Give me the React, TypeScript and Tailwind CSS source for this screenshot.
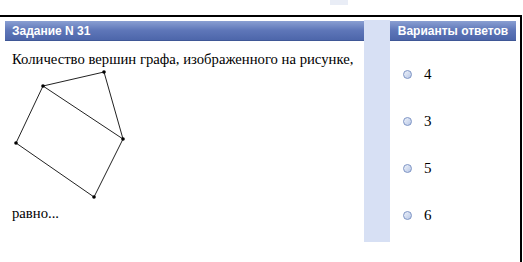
import React from "react";

const answers = ["4", "3", "5", "6"];

const headerCls =
  "h-[20px] flex items-center text-white text-[12px] font-bold font-['Liberation_Sans',sans-serif] bg-gradient-to-b from-[#8a9fd2] via-[#5e76b8] to-[#4d66aa] border-b border-[#3f5796]";

function Graph() {
  const pts: [number, number][] = [
    [104, 72],
    [43, 86],
    [123, 139],
    [16, 143],
    [94, 197],
  ];
  const edges: [number, number][] = [
    [0, 1],
    [0, 2],
    [1, 2],
    [1, 3],
    [3, 4],
    [4, 2],
  ];
  return (
    <svg width="140" height="134" viewBox="8 68 140 134" className="block">
      {edges.map(([a, b], i) => (
        <line
          key={i}
          x1={pts[a][0]}
          y1={pts[a][1]}
          x2={pts[b][0]}
          y2={pts[b][1]}
          stroke="#222"
          strokeWidth="1"
        />
      ))}
      {pts.map(([x, y], i) => (
        <circle key={i} cx={x} cy={y} r="1.8" fill="#000" />
      ))}
    </svg>
  );
}

function Radio() {
  return (
    <span className="w-[9px] h-[9px] rounded-full border border-[#7c93c4] bg-gradient-to-br from-[#eef2fa] to-[#b9c8e6] inline-block" />
  );
}

export default function App() {
  return (
    <div className="w-[523px] h-[262px] bg-white overflow-hidden font-['Liberation_Serif',serif]">
      <div className="h-[15px] flex">
        <div className="ml-[330px] w-[18px] h-[5px] bg-[#e9edf6]" />
      </div>
      <div className="h-[247px] border-t-2 border-r-2 border-black w-[522px] flex pt-[3px]">
        <div className="w-[364px] pl-[5px]">
          <div className={headerCls + " mt-[1px] pl-[7px]"}>Задание N 31</div>
          <div className="pl-[7px] text-[14.7px] text-black">
            <p className="mt-[9px] leading-[18px]">
              Количество вершин графа, изображенного на рисунке,
            </p>
            <div className="-ml-[4px]">
              <Graph />
            </div>
            <p className="mt-[2px] leading-[18px]">равно...</p>
          </div>
        </div>
        <div className="w-[26px] h-[222px] bg-[#d7e0f4]" />
        <div className="w-[126px]">
          <div className={headerCls + " mt-[1px] justify-center"}>Варианты ответов</div>
          <div className="flex flex-col gap-[29px] pl-[13px] pt-[24px] text-[15px] text-black">
            {answers.map((a) => (
              <div key={a} className="flex items-center gap-[12px] h-[18px]">
                <Radio />
                <span>{a}</span>
              </div>
            ))}
          </div>
        </div>
      </div>
    </div>
  );
}
